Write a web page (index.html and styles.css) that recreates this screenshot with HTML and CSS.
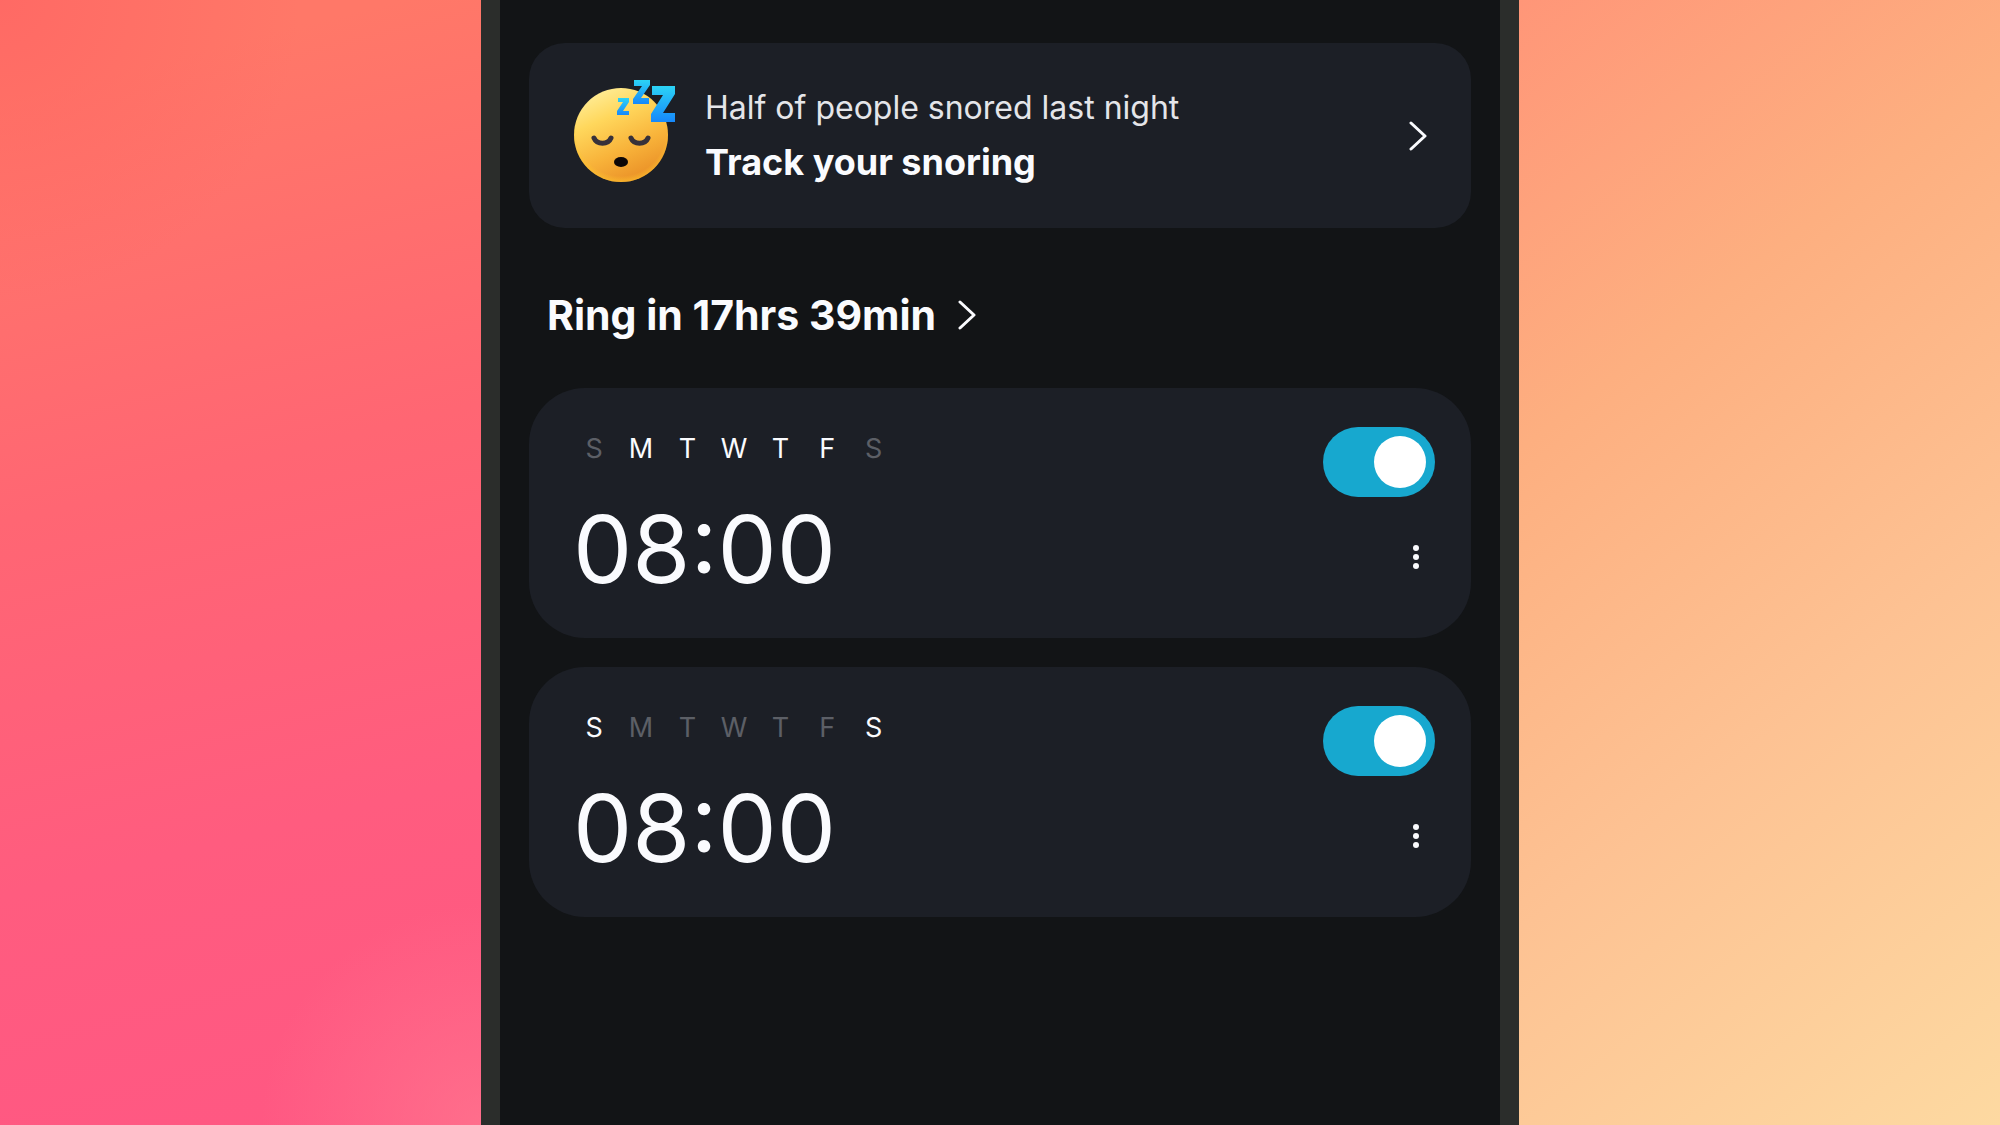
FILE: index.html
```
<!DOCTYPE html>
<html lang="en">
<head>
  <meta charset="UTF-8">
  <meta name="viewport" content="width=device-width, initial-scale=1.0">
  <title>Alarms</title>
  <link rel="stylesheet" href="styles.css">
</head>
<body>

  <main class="phone">
    <a class="snore" href="#">
      <svg class="emoji" viewBox="0 0 104 114" aria-hidden="true">
        <defs>
          <linearGradient id="face" x1="0.25" y1="0" x2="0.7" y2="1">
            <stop offset="0" stop-color="#ffee9a"/>
            <stop offset="0.3" stop-color="#ffd75c"/>
            <stop offset="0.65" stop-color="#f8b33a"/>
            <stop offset="1" stop-color="#e98d25"/>
          </linearGradient>
          <radialGradient id="rim" cx="0.5" cy="0.46" r="0.54">
            <stop offset="0.88" stop-color="#ffc62e" stop-opacity="0"/>
            <stop offset="1" stop-color="#ffc62e" stop-opacity="0.6"/>
          </radialGradient>
          <linearGradient id="zed" x1="0" y1="0" x2="0" y2="1">
            <stop offset="0" stop-color="#2cd3f5"/>
            <stop offset="1" stop-color="#1688fb"/>
          </linearGradient>
        </defs>
        <circle cx="48" cy="56" r="47" fill="url(#face)"/>
        <circle cx="48" cy="56" r="47" fill="url(#rim)"/>
        <path d="M21 59c3 7 14 7 17 0M58 59c3 7 14 7 17 0" fill="none" stroke="#37313a" stroke-width="5" stroke-linecap="round"/>
        <ellipse cx="48" cy="83" rx="7" ry="5" fill="#0c0607"/>
        <path d="M45 19h11v4l-6 9h6v4H44v-4l6-9h-5z" fill="url(#zed)"/>
        <path d="M61 1h16v5l-9 13h8v6H60v-5l9-13h-8z" fill="url(#zed)"/>
        <path d="M79 7h23v8L90 34h12v9H78v-8l12-19H79z" fill="url(#zed)"/>
      </svg>
      <span class="snore-text">
        <span class="snore-info">Half of people snored last night</span>
        <span class="snore-title">Track your snoring</span>
      </span>
      <svg class="chevron" viewBox="0 0 18 30" aria-hidden="true"><path d="M2 2l14 13L2 28"/></svg>
    </a>

    <h2 class="next">
      <a href="#">
        Ring in 17hrs 39min
        <svg class="chevron" viewBox="0 0 18 30" aria-hidden="true"><path d="M2 2l14 13L2 28"/></svg>
      </a>
    </h2>

    <section class="alarm">
      <div>
        <div class="days">
          <span>S</span>
          <span class="on">M</span>
          <span class="on">T</span>
          <span class="on">W</span>
          <span class="on">T</span>
          <span class="on">F</span>
          <span>S</span>
        </div>
        <div class="time">08:00</div>
      </div>
      <div class="controls">
        <input class="toggle" type="checkbox" aria-label="Weekday alarm" checked>
        <button class="more" type="button" aria-label="More options">
          <svg viewBox="0 0 8 28"><circle cx="4" cy="5" r="3"/><circle cx="4" cy="14" r="3"/><circle cx="4" cy="23" r="3"/></svg>
        </button>
      </div>
    </section>

    <section class="alarm">
      <div>
        <div class="days">
          <span class="on">S</span>
          <span>M</span>
          <span>T</span>
          <span>W</span>
          <span>T</span>
          <span>F</span>
          <span class="on">S</span>
        </div>
        <div class="time">08:00</div>
      </div>
      <div class="controls">
        <input class="toggle" type="checkbox" aria-label="Weekend alarm" checked>
        <button class="more" type="button" aria-label="More options">
          <svg viewBox="0 0 8 28"><circle cx="4" cy="5" r="3"/><circle cx="4" cy="14" r="3"/><circle cx="4" cy="23" r="3"/></svg>
        </button>
      </div>
    </section>
  </main>

</body>
</html>
```
FILE: styles.css
```
* {
  box-sizing: border-box;
}

body {
  font-family: 'Inter', 'Liberation Sans', sans-serif;
  margin: 0;
  display: flex;
  min-height: 100vh;
  color: #fafbfe;
}

/* coloured backdrop on both sides of the phone */
body::before,
body::after {
  content: "";
  flex: 1;
}

body::before {
  background:
    radial-gradient(circle at 0 0, rgba(255, 96, 98, 0.6), transparent 300px),
    radial-gradient(circle at 100% 100%, rgba(255, 125, 145, 0.6), transparent 220px),
    linear-gradient(166deg, #ff7868 8%, #ff6673 42%, #ff5c7f 72%, #ff5783);
}

body::after {
  background: linear-gradient(142deg, #ff9678, #fdaf80 30%, #fdc293 62%, #fdd9a1);
}

.phone {
  flex: 0 1 1038px;
  padding: 43px 29px;
  background: #121416;
  border: solid #2b2d2b;
  border-width: 0 19px;
}

a {
  color: inherit;
  text-decoration: none;
}

.snore {
  display: flex;
  align-items: center;
  gap: 28px;
  height: 185px;
  padding: 0 44px;
  border-radius: 36px;
  background: #1c1f26;
}

.emoji {
  width: 104px;
  height: 114px;
}

.snore-text {
  flex: 1;
  display: flex;
  flex-direction: column;
  gap: 8px;
  padding-bottom: 2px;
}

.snore-info {
  font-size: 32px;
  line-height: 46px;
  color: #e4e5e9;
}

.snore-title {
  font-size: 36px;
  line-height: 46px;
  font-weight: 700;
}

.chevron {
  width: 18px;
  height: 30px;
  fill: none;
  stroke: #fafbfe;
  stroke-width: 3;
  stroke-linecap: round;
  stroke-linejoin: round;
}

.next {
  margin: 62px 18px 48px;
  font-size: 41px;
  line-height: 50px;
  font-weight: 700;
}

.next a {
  display: flex;
  align-items: center;
  gap: 22px;
}

.alarm {
  display: flex;
  justify-content: space-between;
  height: 250px;
  margin-bottom: 29px;
  padding: 39px 36px 0 42px;
  border-radius: 56px;
  background: #1c1f26;
}

.days {
  display: grid;
  grid-template-columns: repeat(7, 1fr);
  width: 326px;
  font-size: 27px;
  line-height: 44px;
  text-align: center;
  color: #5c5f66;
}

.days .on {
  color: #fafbfe;
}

.time {
  margin-top: 18px;
  padding-left: 2px;
  font-size: 94px;
  line-height: 120px;
}

.controls {
  display: flex;
  flex-direction: column;
  align-items: flex-end;
  gap: 46px;
}

.toggle {
  appearance: none;
  display: flex;
  align-items: center;
  width: 112px;
  height: 70px;
  margin: 0;
  padding: 9px;
  border-radius: 35px;
  background: #4a4d55;
  cursor: pointer;
}

.toggle::before {
  content: "";
  width: 52px;
  height: 52px;
  border-radius: 50%;
  background: #fff;
}

.toggle:checked {
  justify-content: flex-end;
  background: #17a8cf;
}

.more {
  display: flex;
  justify-content: center;
  padding: 0;
  width: 38px;
  border: none;
  background: none;
  cursor: pointer;
}

.more svg {
  width: 8px;
  height: 28px;
  fill: #fafbfe;
}
```
